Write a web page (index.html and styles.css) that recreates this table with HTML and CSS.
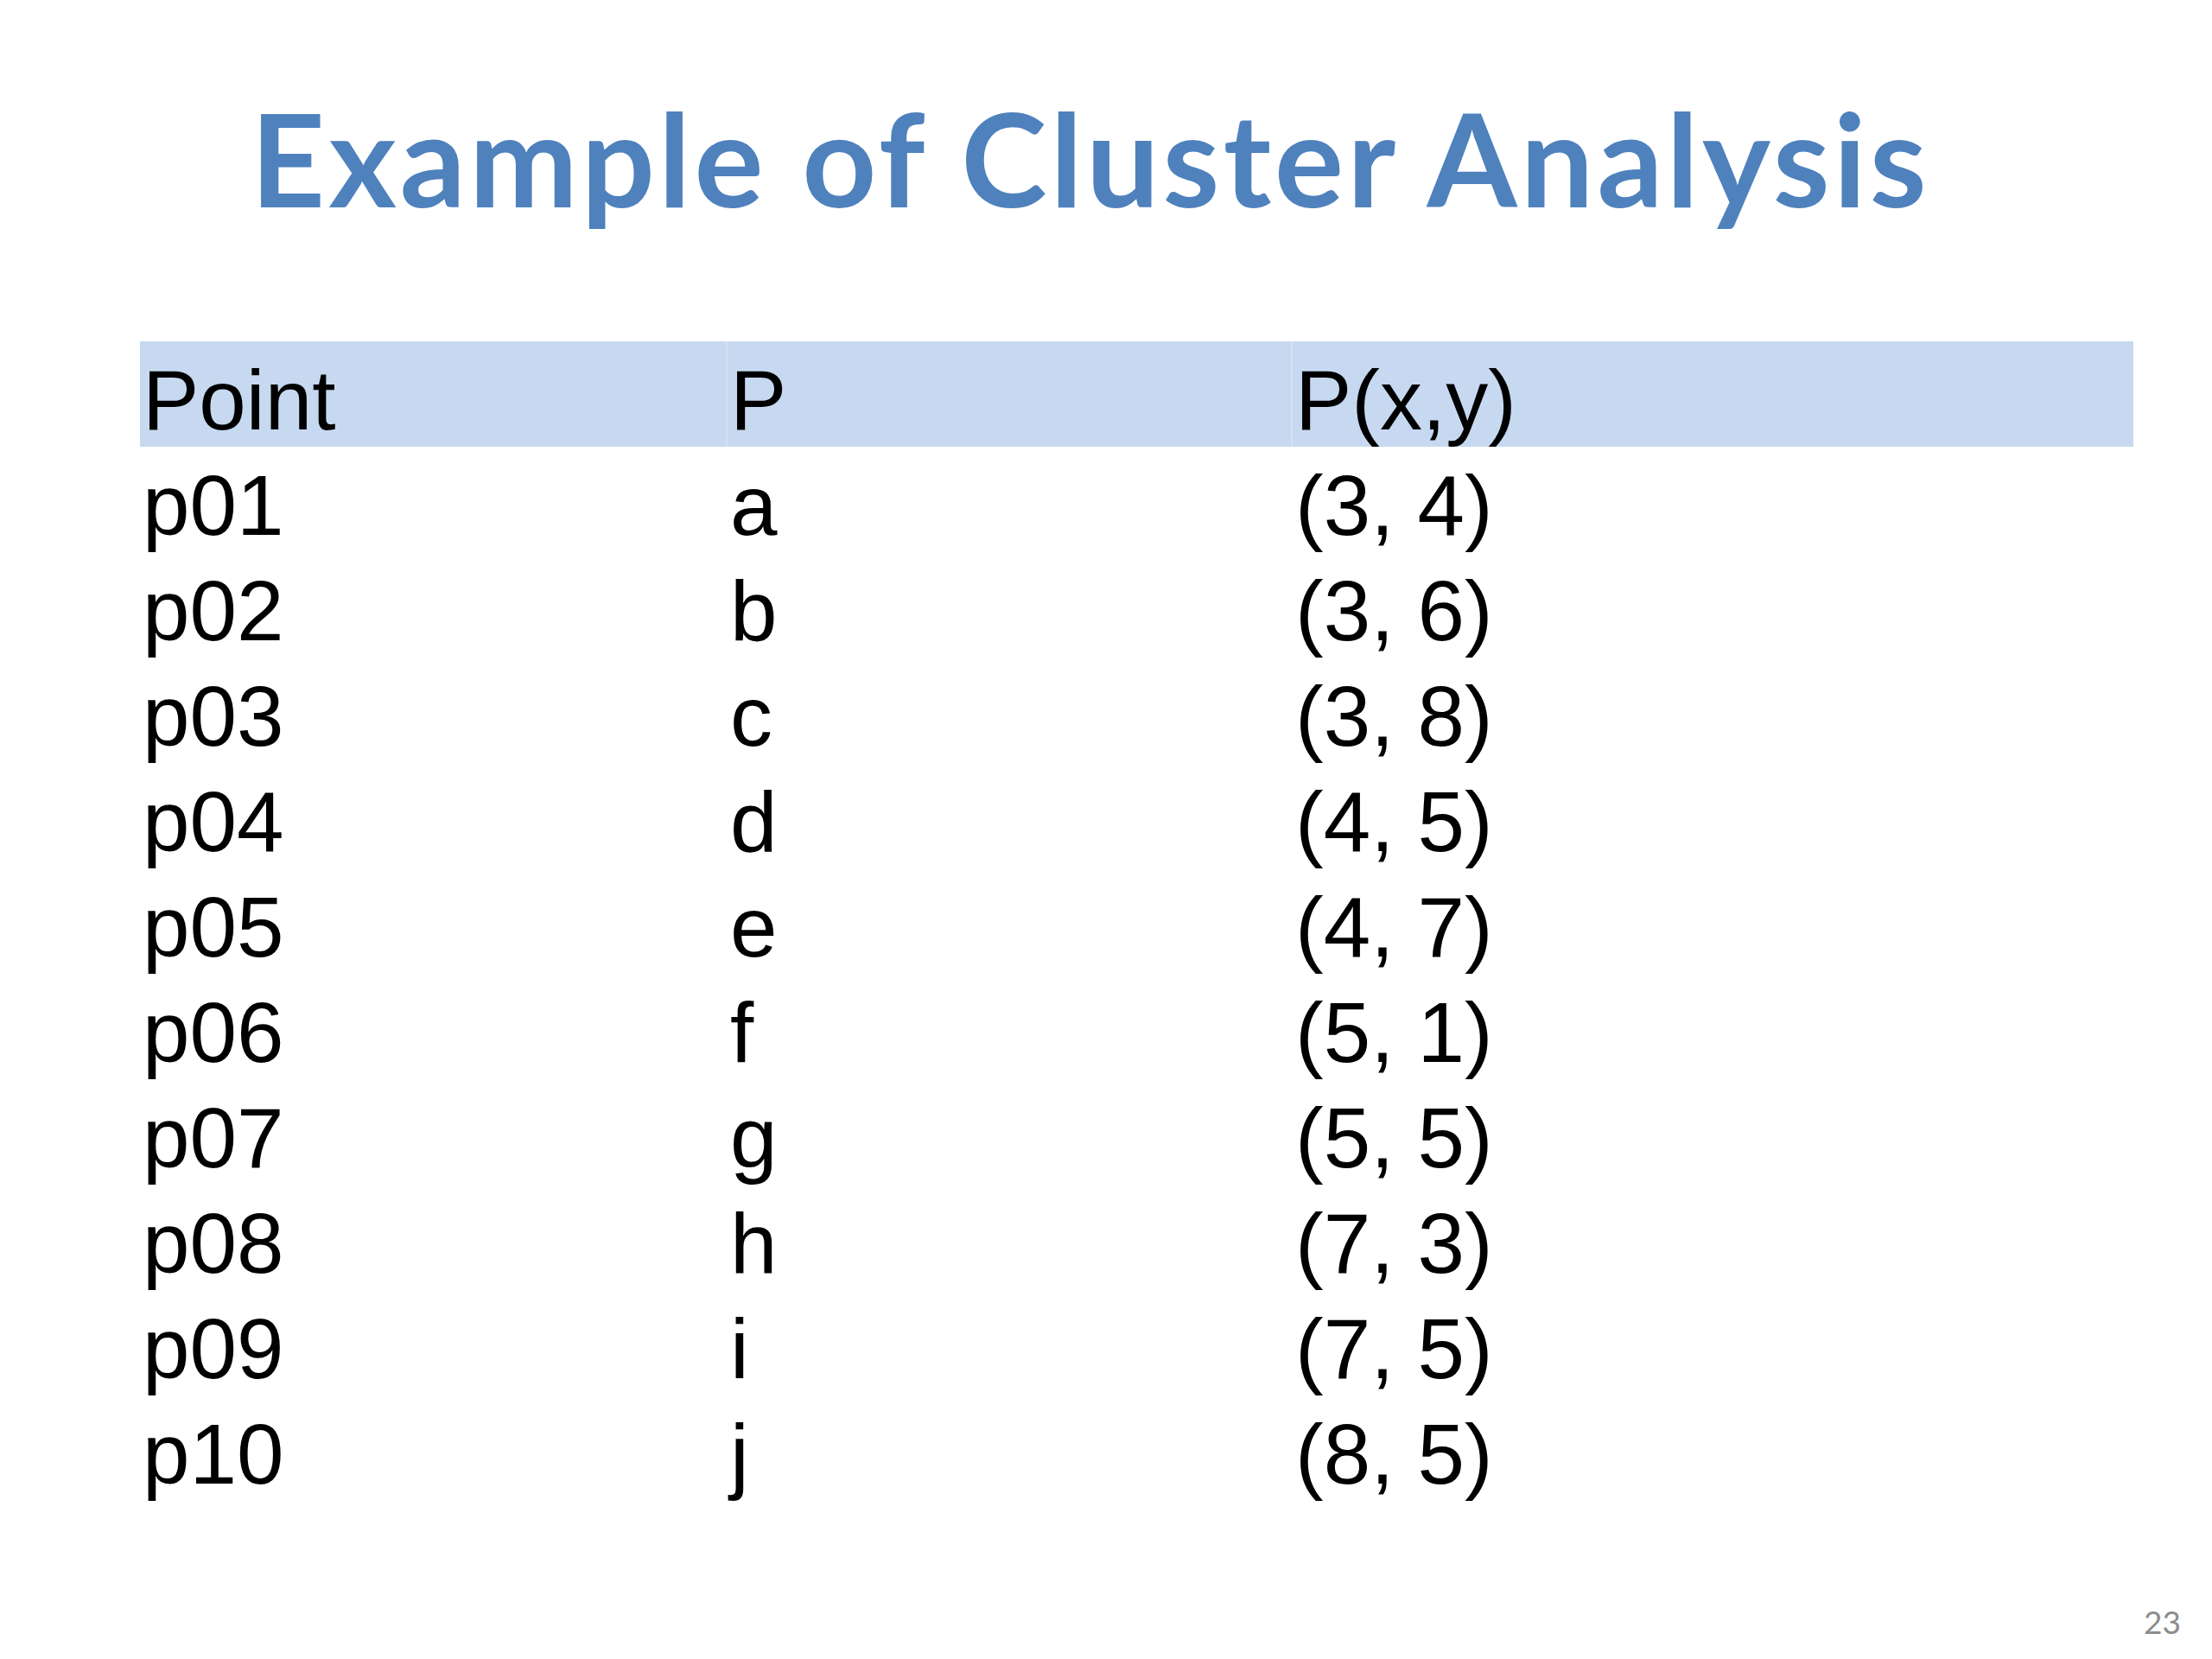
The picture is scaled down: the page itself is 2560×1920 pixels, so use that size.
FILE: index.html
```html
<!DOCTYPE html>
<html lang="en">
<head>
<meta charset="utf-8">
<title>Example of Cluster Analysis</title>
<link rel="stylesheet" href="styles.css">
</head>
<body>
<div class="slide">
  <h1 class="title">Example of Cluster Analysis</h1>
  <div class="table">
    <div class="row head"><div class="cell c1">Point</div><div class="cell c2">P</div><div class="cell c3">P(x,y)</div></div>
    <div class="row"><div class="cell">p01</div><div class="cell">a</div><div class="cell">(3, 4)</div></div>
    <div class="row"><div class="cell">p02</div><div class="cell">b</div><div class="cell">(3, 6)</div></div>
    <div class="row"><div class="cell">p03</div><div class="cell">c</div><div class="cell">(3, 8)</div></div>
    <div class="row"><div class="cell">p04</div><div class="cell">d</div><div class="cell">(4, 5)</div></div>
    <div class="row"><div class="cell">p05</div><div class="cell">e</div><div class="cell">(4, 7)</div></div>
    <div class="row"><div class="cell">p06</div><div class="cell">f</div><div class="cell">(5, 1)</div></div>
    <div class="row"><div class="cell">p07</div><div class="cell">g</div><div class="cell">(5, 5)</div></div>
    <div class="row"><div class="cell">p08</div><div class="cell">h</div><div class="cell">(7, 3)</div></div>
    <div class="row"><div class="cell">p09</div><div class="cell">i</div><div class="cell">(7, 5)</div></div>
    <div class="row"><div class="cell">p10</div><div class="cell">j</div><div class="cell">(8, 5)</div></div>
  </div>
  <div class="footer"><span class="pagenum">23</span></div>
</div>
</body>
</html>
```

FILE: styles.css
```css
html, body {
  margin: 0;
  padding: 0;
  background: #ffffff;
}

.slide {
  width: 2560px;
  height: 1920px;
  display: flex;
  flex-direction: column;
  box-sizing: border-box;
}

.title {
  margin: 0;
  padding: 92px 36px 0 0;
  height: 303px;
  box-sizing: border-box;
  text-align: center;
  font-family: Lato, "Open Sans", sans-serif;
  font-weight: 700;
  font-size: 150px;
  line-height: 180px;
  color: #4f81bd;
  letter-spacing: 4.1px;
}

.table {
  margin: 92px 0 0 162px;
  width: 2307px;
  font-family: "Liberation Sans", Arial, sans-serif;
  font-size: 98px;
  color: #000000;
}

.row {
  display: grid;
  grid-template-columns: 680px 654px 973px;
  height: 122px;
}

.row.head {
  background: #c6d9f0;
}

.cell {
  box-sizing: border-box;
  height: 122px;
  padding: 15px 0 0 3px;
  line-height: 107px;
  white-space: nowrap;
}

.head .c2,
.head .c3 {
  border-left: 2px solid rgba(255, 255, 255, 0.25);
  margin-left: -2px;
}

.footer {
  margin-top: auto;
  display: flex;
  justify-content: flex-end;
  padding: 0 36px 25px 0;
}

.pagenum {
  font-family: Lato, "Open Sans", sans-serif;
  font-size: 37px;
  line-height: 37px;
  color: #8c8c8c;
}
```
